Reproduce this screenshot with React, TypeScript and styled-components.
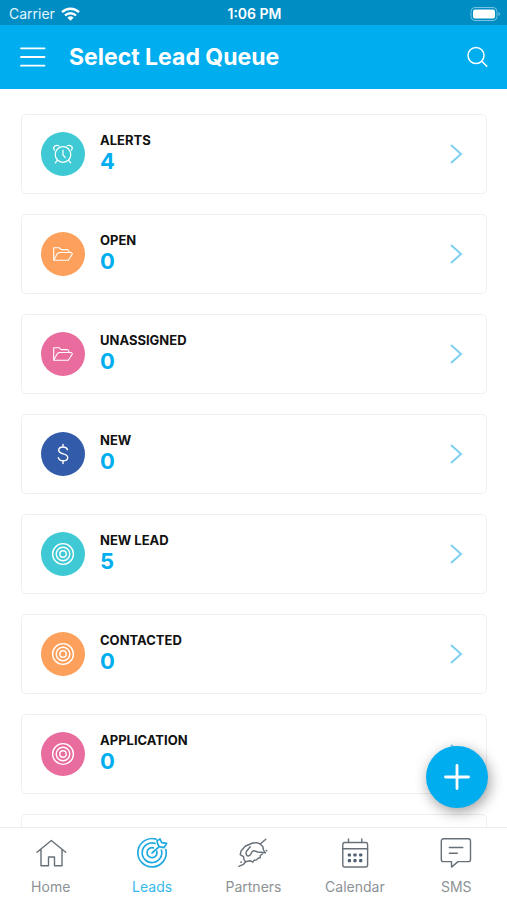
import React, { ReactNode } from "react";
import styled, { createGlobalStyle } from "styled-components";

const brand = "#00aeef";
const aqua = "#3fc9d5";
const orange = "#fca05c";
const pink = "#e96c9e";
const navy = "#325ba9";

const GlobalStyle = createGlobalStyle`
  * { box-sizing: border-box; }
  body { margin: 0; background: #fff; font-family: Inter, "Open Sans", sans-serif; }
  button { border: 0; padding: 0; background: none; font: inherit; color: inherit; cursor: pointer; }
  svg { display: block; flex: none; overflow: visible; }
`;

const Screen = styled.div`
  display: flex;
  flex-direction: column;
  height: 100vh;
`;

const StatusBar = styled.div`
  display: grid;
  grid-template-columns: 1fr auto 1fr;
  align-items: center;
  height: 25px;
  padding: 2px 7px 0 9px;
  background: #008dc4;
  color: #e2f6fd;
  font-size: 14px;
`;

const Carrier = styled.div`
  display: flex;
  align-items: center;
  gap: 6px;
`;

const Time = styled.div`
  color: #fff;
  font-weight: 600;
  font-size: 14px;
`;

const Battery = styled.div`
  justify-self: end;
`;

const Header = styled.header`
  display: flex;
  align-items: center;
  height: 64px;
  padding: 0 19px 0 20px;
  background: ${brand};
  color: #fff;
`;

const Title = styled.h1`
  flex: 1;
  margin: 0 0 0 23px;
  font-size: 23px;
  line-height: 28px;
  font-weight: 700;
`;

const Main = styled.main`
  position: relative;
  flex: 1;
  min-height: 0;
`;

const QueueList = styled.ul`
  display: flex;
  flex-direction: column;
  gap: 20px;
  height: 100%;
  margin: 0;
  padding: 25px 20px 20px 21px;
  list-style: none;
  overflow-y: auto;
  scrollbar-width: none;
`;

const QueueCard = styled.button`
  display: flex;
  align-items: center;
  width: 100%;
  height: 80px;
  padding: 0 23px 0 19px;
  border: 1px solid #efefef;
  border-radius: 5px;
  text-align: left;
`;

const Badge = styled.span<{ $color: string }>`
  display: flex;
  align-items: center;
  justify-content: center;
  width: 44px;
  height: 44px;
  border-radius: 50%;
  background: ${(p) => p.$color};
  color: #fff;
`;

const QueueText = styled.span`
  display: flex;
  flex-direction: column;
  flex: 1;
  margin-left: 15px;
  padding-bottom: 4px;
`;

const QueueName = styled.span`
  color: #111;
  font-size: 13px;
  line-height: 18px;
  font-weight: 700;
`;

const QueueCount = styled.span`
  color: ${brand};
  font-size: 22px;
  line-height: 24px;
  font-weight: 700;
`;

const AddButton = styled.button`
  position: absolute;
  right: 19px;
  bottom: 19px;
  display: flex;
  align-items: center;
  justify-content: center;
  width: 62px;
  height: 62px;
  border-radius: 50%;
  background: ${brand};
  color: #fff;
  box-shadow: 2px 4px 14px rgba(0, 0, 0, 0.38);
`;

const TabBar = styled.nav`
  display: grid;
  grid-template-columns: repeat(5, 1fr);
  height: 73px;
  border-top: 1px solid #ececec;
  background: #fff;
`;

const Tab = styled.a<{ $active?: boolean }>`
  display: flex;
  flex-direction: column;
  align-items: center;
  gap: 8px;
  padding-top: 7px;
  color: ${(p) => (p.$active ? "#21aae1" : "#677078")};
  text-decoration: none;
`;

const TabLabel = styled.span<{ $active?: boolean }>`
  color: ${(p) => (p.$active ? "#38b9eb" : "#8d9296")};
  font-size: 14px;
  line-height: 20px;
`;

const Line = ({ size, width = 1.4, children }: { size: number; width?: number; children: ReactNode }) => (
  <svg
    width={size}
    height={size}
    viewBox={`0 0 ${size} ${size}`}
    fill="none"
    stroke="currentColor"
    strokeWidth={width}
    strokeLinecap="round"
    strokeLinejoin="round"
    aria-hidden="true"
  >
    {children}
  </svg>
);

const AlarmIcon = () => (
  <Line size={22} width={1.2}>
    <circle cx="11" cy="11.5" r="7.8" />
    <path d="M11 7v5l2.300 2.600M2.500 7.200C.4 4.600 3 1.300 6.800 2.700M19.500 7.200c2.100-2.600-.5-5.900-4.300-4.500M5.300 17.300l-2 2.500M16.700 17.300l2 2.500" />
  </Line>
);

const FolderIcon = () => (
  <Line size={22} width={1.1}>
    <path d="M1.700 17.300h14.600l4.200-6.500-1.200-1.300H7.300L5.400 10.600 1.700 17.300V4.800h5.600l1.800 1.800h6.400l1.300 1v1.900" />
  </Line>
);

const DollarIcon = () => (
  <Line size={22} width={1.4}>
    <path d="M15.500 6.700C14.800 4.800 13.200 4 11 4 8.400 4 6.700 5.300 6.700 7.300c0 4.600 9 2.500 9 7.200 0 2-1.900 3.300-4.600 3.300-2.500 0-4.300-1.100-4.800-3.100M11 1.500V4M11 17.800v2.700" />
  </Line>
);

const TargetIcon = () => (
  <Line size={22} width={1.4}>
    <circle cx="11" cy="11" r="10.400" />
    <circle cx="11" cy="11" r="6.800" />
    <circle cx="11" cy="11" r="3.200" />
  </Line>
);

const HomeIcon = () => (
  <Line size={34}>
    <path d="M3 17.300 17.300 5.500l14.400 11.800M7 14.500v16.300h7.500V22h6v8.800H28V14.500" />
  </Line>
);

const LeadsIcon = () => (
  <Line size={34} width={1.700}>
    <path d="M21 4.100A14.200 14.200 0 1 0 30.900 14.700M20 8.400A9.800 9.800 0 1 0 26.400 15M18.500 12.900A5 5 0 1 0 21.800 16.200M17 18l7.300-6.300M24.300 11.700 22.700 9l-.7-3.300L25 4l1.700 3.700 5 .6-2.700 4.400z" />
  </Line>
);

const PartnersIcon = () => (
  <Line size={34} width={1.4}>
    <g transform="translate(0 2)">
      <path d="M29.800 2.300 24.200 7l-3.400-1.300-4 .3L9.500 9l-4.300 4.700-1 4 3.300 2 .5 3 1.500 2 4.700-1 2.600 1.500 1.400-2 2-.2 2-1.700 2-.5v-2.300l2.300-1.500M24.200 7l2.600 2.500.7 3.500 1.500 2.500" />
      <path d="M14.200 9.700 10.500 14.300c-1 2.400-.2 4.700 1.800 4.700 3.300 0 2.200-4.600 5.200-5.300l4.300 1.300 7.700.7M9.500 24.700l-2 2.600L2.800 29.300M30.200 13.500l.6.300M4.800 25.300l.6-.3" />
    </g>
  </Line>
);

const CalendarIcon = () => (
  <Line size={34}>
    <rect x="4.800" y="7.500" width="24.800" height="24.500" rx="2" />
    <path d="M4.800 13.700h24.800M10.500 4v3.500M23.800 4v3.500" />
    {[20, 25.7].map((cy) =>
      [11.4, 17, 22.7].map((cx) => (
        <rect key={`${cx}-${cy}`} x={cx - 1.6} y={cy - 1.6} width="3.200" height="3.200" rx="0.800" fill="#4f6073" stroke="none" />
      ))
    )}
  </Line>
);

const SmsIcon = () => (
  <Line size={34}>
    <path d="M4.500 3.800h24.800a2.200 2.200 0 0 1 2.200 2.200v18.400a2.200 2.200 0 0 1-2.200 2.200H19l-6.500 5.500v-5.500h-8a2.200 2.200 0 0 1-2.200-2.200V6a2.200 2.200 0 0 1 2.200-2.200zM10.300 12.500h13.500M10.300 18.300h8" />
  </Line>
);

const queues = [
  { name: "ALERTS", count: 4, color: aqua, Icon: AlarmIcon },
  { name: "OPEN", count: 0, color: orange, Icon: FolderIcon },
  { name: "UNASSIGNED", count: 0, color: pink, Icon: FolderIcon },
  { name: "NEW", count: 0, color: navy, Icon: DollarIcon },
  { name: "NEW LEAD", count: 5, color: aqua, Icon: TargetIcon },
  { name: "CONTACTED", count: 0, color: orange, Icon: TargetIcon },
  { name: "APPLICATION", count: 0, color: pink, Icon: TargetIcon },
];

const tabs = [
  { label: "Home", Icon: HomeIcon },
  { label: "Leads", Icon: LeadsIcon, active: true },
  { label: "Partners", Icon: PartnersIcon },
  { label: "Calendar", Icon: CalendarIcon },
  { label: "SMS", Icon: SmsIcon },
];

export default function App() {
  return (
    <Screen>
      <GlobalStyle />
      <StatusBar>
        <Carrier>
          Carrier
          <svg width="19" height="14" viewBox="0 0 19 14" fill="none" stroke="#fff" strokeWidth="2.400" aria-hidden="true">
            <path d="M1 5.200a12.200 12.200 0 0 1 17 0M4 8.500a7.900 7.900 0 0 1 11 0" />
            <path d="M9.500 13.800 6.400 10.700a4.500 4.500 0 0 1 6.200 0z" fill="#fff" stroke="none" />
          </svg>
        </Carrier>
        <Time>1:06 PM</Time>
        <Battery>
          <svg width="30" height="14" viewBox="0 0 30 14" aria-hidden="true">
            <rect x="1" y="0.500" width="26" height="13" rx="4" fill="none" stroke="#74c3e2" />
            <rect x="3" y="2.500" width="22" height="9" rx="2" fill="#fff" />
            <path d="M28.500 5v4q1.500-.6 1.500-2t-1.500-2z" fill="#74c3e2" />
          </svg>
        </Battery>
      </StatusBar>
      <Header>
        <button aria-label="Menu">
          <Line size={26} width={1.800}>
            <path d="M1 4.300h23.500M1 13h23.500M1 21.700h23.500" />
          </Line>
        </button>
        <Title>Select Lead Queue</Title>
        <button aria-label="Search">
          <Line size={22} width={1.500}>
            <circle cx="10" cy="9.500" r="8" />
            <path d="m15.800 15.300 5 4.900" />
          </Line>
        </button>
      </Header>
      <Main>
        <QueueList>
          {queues.map(({ name, count, color, Icon }) => (
            <li key={name}>
              <QueueCard>
                <Badge $color={color}>
                  <Icon />
                </Badge>
                <QueueText>
                  <QueueName>{name}</QueueName>
                  <QueueCount>{count}</QueueCount>
                </QueueText>
                <svg width="14" height="20" viewBox="0 0 14 20" fill="none" stroke="#7dd0f0" strokeWidth="2" aria-hidden="true">
                  <path d="m2 1 10 9-10 9" />
                </svg>
              </QueueCard>
            </li>
          ))}
          <li>
            <QueueCard aria-label="More leads" />
          </li>
        </QueueList>
        <AddButton aria-label="Add lead">
          <Line size={26} width={2.800}>
            <path d="M13 1.500v23M1.500 13h23" />
          </Line>
        </AddButton>
      </Main>
      <TabBar>
        {tabs.map(({ label, Icon, active }) => (
          <Tab key={label} href="#" $active={active} aria-current={active ? "page" : undefined}>
            <Icon />
            <TabLabel $active={active}>{label}</TabLabel>
          </Tab>
        ))}
      </TabBar>
    </Screen>
  );
}
